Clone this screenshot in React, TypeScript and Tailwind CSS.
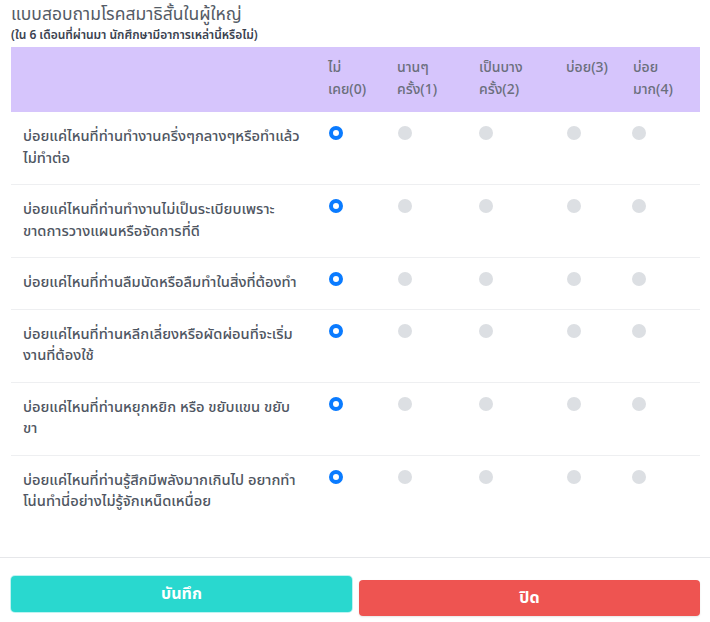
import React from "react";

const font = { fontFamily: '"Noto Sans Thai", "Noto Sans", "Liberation Sans", sans-serif' };

const questions: string[][] = [
  ["บ่อยแค่ไหนที่ท่านทำงานครึ่งๆกลางๆหรือทำแล้ว", "ไม่ทำต่อ"],
  ["บ่อยแค่ไหนที่ท่านทำงานไม่เป็นระเบียบเพราะ", "ขาดการวางแผนหรือจัดการที่ดี"],
  ["บ่อยแค่ไหนที่ท่านลืมนัดหรือลืมทำในสิ่งที่ต้องทำ"],
  ["บ่อยแค่ไหนที่ท่านหลีกเลี่ยงหรือผัดผ่อนที่จะเริ่ม", "งานที่ต้องใช้"],
  ["บ่อยแค่ไหนที่ท่านหยุกหยิก หรือ ขยับแขน ขยับ", "ขา"],
  ["บ่อยแค่ไหนที่ท่านรู้สึกมีพลังมากเกินไป อยากทำ", "โน่นทำนี่อย่างไม่รู้จักเหน็ดเหนื่อย"],
];

const headers: string[][] = [
  ["ไม่", "เคย(0)"],
  ["นานๆ", "ครั้ง(1)"],
  ["เป็นบาง", "ครั้ง(2)"],
  ["บ่อย(3)"],
  ["บ่อย", "มาก(4)"],
];

const radioPad = ["pl-[13px]", "pl-[13px]", "pl-[12px]", "pl-[13px]", "pl-[11px]"];

function Checked() {
  return <div className="w-[14px] h-[14px] rounded-full border-[4px] border-[#0a7bff] bg-white" />;
}
function Unchecked() {
  return <div className="w-[14px] h-[14px] rounded-full bg-[#dcdfe3]" />;
}

export default function App() {
  return (
    <div className="w-[710px] h-[622px] bg-white flex flex-col" style={font}>
      <div className="px-[11px] pt-[3px]">
        <div className="text-[17.5px] leading-[23px] text-[#545b66]">แบบสอบถามโรคสมาธิสั้นในผู้ใหญ่</div>
        <div className="mt-[1px] text-[12px] leading-[17px] font-semibold text-[#3b4250]">
          (ใน 6 เดือนที่ผ่านมา นักศึกษามีอาการเหล่านี้หรือไม่)
        </div>
        <div className="mt-[3px] grid grid-cols-[305px_69px_82px_87px_67px_79px]">
          <div className="bg-[#d6c5fc] h-[65px]" />
          {headers.map((h, i) => (
            <div key={i} className="bg-[#d6c5fc] h-[65px] pl-[12px] pt-[10px] text-[14px] leading-[22px] text-[#6b6f7c] font-medium">
              {h.map((l, j) => (
                <div key={j} className="whitespace-nowrap">{l}</div>
              ))}
            </div>
          ))}
          {questions.map((q, r) => (
            <React.Fragment key={r}>
              <div className={`${r > 0 ? "border-t border-[#eeeff1]" : ""} pl-[12px] pr-[4px] pt-[14px] pb-[15px] text-[14.7px] leading-[21.5px] font-medium text-[#4f5662]`}>
                {q.map((l, j) => (
                  <div key={j} className="whitespace-nowrap">{l}</div>
                ))}
              </div>
              {radioPad.map((p, c) => (
                <div key={c} className={`${r > 0 ? "border-t border-[#eeeff1]" : ""} ${p} pt-[14px]`}>
                  {c === 0 ? <Checked /> : <Unchecked />}
                </div>
              ))}
            </React.Fragment>
          ))}
        </div>
      </div>
      <div className="mt-[29px] border-t border-[#e6e7ea] px-[11px] pt-[18px] flex items-start gap-[7px] pr-[10px]">
        <button className="w-[341px] h-[36px] rounded-[4px] bg-[#29d8cf] text-white font-bold text-[16px] shadow-[0_0_0_1px_rgba(41,216,207,0.3)]">
          บันทึก
        </button>
        <button className="mt-[4px] w-[341px] h-[36px] rounded-[4px] bg-[#ee5451] text-white font-bold text-[16px] shadow-[0_1px_2px_rgba(0,0,0,0.1)]">
          ปิด
        </button>
      </div>
    </div>
  );
}
